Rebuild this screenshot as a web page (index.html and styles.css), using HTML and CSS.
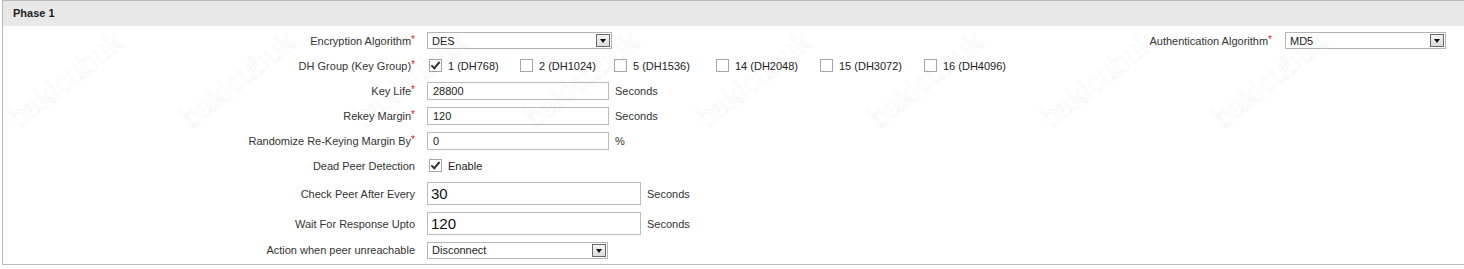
FILE: index.html
```html
<!DOCTYPE html>
<html lang="en">
<head>
    <meta charset="UTF-8">
    <title>Phase 1</title>
    <link rel="stylesheet" href="styles.css">
</head>
<body>
    <div class="panel">
        <div class="panel-head">Phase 1</div>
        <div class="panel-body">
            <div class="row">
                <label class="lbl">Encryption Algorithm<span class="req">*</span></label>
                <div class="select sel-enc"><span>DES</span><i class="arrow"></i></div>
                <div class="right-field">
                    <label class="lbl-right">Authentication Algorithm<span class="req">*</span></label>
                    <div class="select sel-auth"><span>MD5</span><i class="arrow"></i></div>
                </div>
            </div>
            <div class="row">
                <label class="lbl">DH Group (Key Group)<span class="req">*</span></label>
                <div class="dh-groups">
                    <span class="check on"><b class="box"></b>1 (DH768)</span>
                    <span class="check"><b class="box"></b>2 (DH1024)</span>
                    <span class="check"><b class="box"></b>5 (DH1536)</span>
                    <span class="check"><b class="box"></b>14 (DH2048)</span>
                    <span class="check"><b class="box"></b>15 (DH3072)</span>
                    <span class="check"><b class="box"></b>16 (DH4096)</span>
                </div>
            </div>
            <div class="row">
                <label class="lbl">Key Life<span class="req">*</span></label>
                <input class="txt" type="text" value="28800">
                <span class="unit">Seconds</span>
            </div>
            <div class="row">
                <label class="lbl">Rekey Margin<span class="req">*</span></label>
                <input class="txt" type="text" value="120">
                <span class="unit">Seconds</span>
            </div>
            <div class="row">
                <label class="lbl">Randomize Re-Keying Margin By<span class="req">*</span></label>
                <input class="txt" type="text" value="0">
                <span class="unit">%</span>
            </div>
            <div class="row">
                <label class="lbl">Dead Peer Detection</label>
                <span class="check on"><b class="box"></b>Enable</span>
            </div>
            <div class="row row-big first-big">
                <label class="lbl">Check Peer After Every</label>
                <input class="txt txt-big" type="text" value="30">
                <span class="unit">Seconds</span>
            </div>
            <div class="row row-big">
                <label class="lbl">Wait For Response Upto</label>
                <input class="txt txt-big" type="text" value="120">
                <span class="unit">Seconds</span>
            </div>
            <div class="row row-last">
                <label class="lbl">Action when peer unreachable</label>
                <div class="select sel-action"><span>Disconnect</span><i class="arrow"></i></div>
            </div>
        </div>

        <!-- watermark -->
        <div class="wm">
            <span style="left:20px;top:100px">bakicubuk</span>
            <span style="left:192px;top:100px">bakicubuk</span>
            <span style="left:364px;top:100px">bakicubuk</span>
            <span style="left:536px;top:100px">bakicubuk</span>
            <span style="left:708px;top:100px">bakicubuk</span>
            <span style="left:880px;top:100px">bakicubuk</span>
            <span style="left:1052px;top:100px">bakicubuk</span>
            <span style="left:1224px;top:100px">bakicubuk</span>
        </div>
    </div>
</body>
</html>
```

FILE: styles.css
```css
body {
    margin: 0;
    padding: 0;
    background: #fff;
    font-family: "Liberation Sans", Arial, sans-serif;
    font-size: 11px;
    color: #333;
    overflow: hidden;
}

.panel {
    position: relative;
    margin-left: 2px;
    border-top: 1px solid #b9b9b9;
    border-left: 1px solid #b9b9b9;
    border-bottom: 1px solid #b9b9b9;
    overflow: hidden;
}

.panel-head {
    height: 25px;
    line-height: 25px;
    padding-left: 10px;
    background: #e8e8e8;
    font-weight: bold;
    color: #222;
}

.panel-body {
    padding: 2px 0 2px 0;
}

.row {
    display: flex;
    align-items: center;
    height: 25px;
}

.row-big {
    height: 29px;
}

.first-big {
    height: 31px;
}

.row-last {
    height: 24px;
}

.lbl {
    width: 412px;
    padding-right: 12px;
    text-align: right;
    flex: none;
}

.req {
    color: #d22;
    font-size: 10px;
    vertical-align: 2px;
}

/* fake selects */
.select {
    display: flex;
    align-items: center;
    height: 15px;
    border: 1px solid #b5b5b5;
    background: #fff;
    padding-left: 4px;
    padding-right: 1px;
    color: #222;
}

.select span {
    flex: 1;
}

.sel-enc {
    width: 178px;
}

.sel-auth {
    width: 154px;
}

.sel-action {
    width: 174px;
}

.arrow {
    width: 12px;
    height: 11px;
    border: 1px solid #6a6a6a;
    background: linear-gradient(#f4f4f4, #dcdcdc);
    position: relative;
}

.arrow::after {
    content: "";
    position: absolute;
    left: 3px;
    top: 4px;
    border-left: 3px solid transparent;
    border-right: 3px solid transparent;
    border-top: 4px solid #111;
}

.right-field {
    margin-left: auto;
    margin-right: 18px;
    display: flex;
    align-items: center;
}

.lbl-right {
    padding-right: 13px;
}

/* checkboxes */
.dh-groups {
    display: grid;
    grid-template-columns: 91px 94px 102px 104px 104px auto;
    padding-left: 2px;
}

.check {
    display: flex;
    align-items: center;
    color: #222;
}

.row > .check {
    padding-left: 2px;
}

.box {
    width: 11px;
    height: 11px;
    border: 1px solid #a6a6a6;
    background: #fff;
    margin-right: 6px;
    position: relative;
}

.check.on .box::after {
    content: "";
    position: absolute;
    left: 3px;
    top: 0px;
    width: 3px;
    height: 7px;
    border-right: 2px solid #333;
    border-bottom: 2px solid #333;
    transform: rotate(40deg);
}

/* text inputs */
.txt {
    width: 175px;
    height: 16px;
    padding: 0 0 0 5px;
    margin: 0;
    border: 1px solid #bcbcbc;
    font-family: "Liberation Sans", Arial, sans-serif;
    font-size: 11px;
    color: #222;
    box-sizing: content-box;
    outline: none;
}

.txt-big {
    width: 209px;
    height: 21px;
    padding-left: 3px;
    font-size: 15px;
    color: #111;
}

.unit {
    margin-left: 6px;
    color: #333;
}

/* watermark over the form */
.wm {
    position: absolute;
    left: 0;
    top: 0;
    right: 0;
    bottom: 0;
    pointer-events: none;
}

.wm span {
    position: absolute;
    font-size: 30px;
    color: transparent;
    -webkit-text-stroke: 1px rgba(0, 0, 0, 0.06);
    transform: rotate(-38deg);
    transform-origin: left bottom;
    white-space: nowrap;
}
```
